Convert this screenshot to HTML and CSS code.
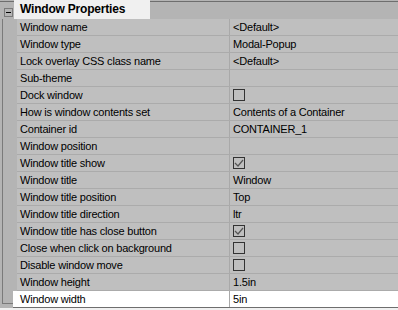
FILE: index.html
```html
<!DOCTYPE html>
<html>

<head>
    <meta charset="utf-8">
    <title>Window Properties</title>
    <link rel="stylesheet" href="styles.css">
</head>

<body>
    <div class="grid">
        <div class="cat">
            <div class="cat-gutter"><span class="minus"></span></div>
            <div class="cat-title">Window Properties</div>
            <div class="cat-fill"></div>
        </div>
        <div class="group">
            <div class="gutter"><div class="bracket"></div></div>
            <div class="rows">
                <div class="row"><div class="name">Window name</div><div class="val">&lt;Default&gt;</div></div>
                <div class="row"><div class="name">Window type</div><div class="val">Modal-Popup</div></div>
                <div class="row"><div class="name">Lock overlay CSS class name</div><div class="val">&lt;Default&gt;</div></div>
                <div class="row"><div class="name">Sub-theme</div><div class="val"></div></div>
                <div class="row"><div class="name">Dock window</div><div class="val"><span class="chk"></span></div></div>
                <div class="row"><div class="name">How is window contents set</div><div class="val">Contents of a Container</div></div>
                <div class="row"><div class="name">Container id</div><div class="val">CONTAINER_1</div></div>
                <div class="row"><div class="name">Window position</div><div class="val"></div></div>
                <div class="row"><div class="name">Window title show</div><div class="val"><span class="chk"><svg width="10" height="10" viewBox="0 0 10 10"><path d="M1 5 L4 8 L9 2" fill="none" stroke="#555" stroke-width="1.2"/></svg></span></div></div>
                <div class="row"><div class="name">Window title</div><div class="val">Window</div></div>
                <div class="row"><div class="name">Window title position</div><div class="val">Top</div></div>
                <div class="row"><div class="name">Window title direction</div><div class="val">ltr</div></div>
                <div class="row"><div class="name">Window title has close button</div><div class="val"><span class="chk"><svg width="10" height="10" viewBox="0 0 10 10"><path d="M1 5 L4 8 L9 2" fill="none" stroke="#555" stroke-width="1.2"/></svg></span></div></div>
                <div class="row"><div class="name">Close when click on background</div><div class="val"><span class="chk"></span></div></div>
                <div class="row"><div class="name">Disable window move</div><div class="val"><span class="chk"></span></div></div>
                <div class="row"><div class="name">Window height</div><div class="val">1.5in</div></div>
                <div class="row selected"><div class="name">Window width</div><div class="val">5in</div></div>
            </div>
        </div>
    </div>
</body>

</html>
```

FILE: styles.css
```css
* {
    margin: 0;
    padding: 0;
    box-sizing: border-box;
}

body {
    background: #f0f0f0;
    font-family: "Liberation Sans", Arial, sans-serif;
    font-size: 11px;
    letter-spacing: -0.2px;
    color: #000000;
}

.grid {
    width: 398px;
    background: #b4b4b4;
}

.cat {
    display: flex;
    height: 19px;
}

.cat-gutter {
    width: 14px;
    border-top: 1px solid #6e6e6e;
    margin-top: 1px;
    padding: 6px 0 0 4px;
}

.minus {
    display: block;
    width: 9px;
    height: 9px;
    border: 1px solid #7a7a7a;
    position: relative;
}

.minus::after {
    content: "";
    position: absolute;
    left: 1px;
    top: 3px;
    width: 5px;
    height: 1px;
    background: #000000;
}

.cat-title {
    width: 136px;
    background: #f0f0f0;
    font-weight: bold;
    font-size: 12px;
    line-height: 19px;
    padding-left: 6px;
}

.cat-fill {
    flex: 1;
    border-top: 1px solid #6e6e6e;
    margin-top: 1px;
}

.group {
    display: flex;
}

.gutter {
    width: 17px;
    padding-left: 2px;
}

.bracket {
    width: 11px;
    height: 285px;
    border-left: 1px solid #7a7a7a;
    border-bottom: 1px solid #7a7a7a;
}

.rows {
    flex: 1;
}

.row {
    display: flex;
    height: 17px;
    background: #bfbfbf;
    border-bottom: 1px solid #ababab;
}

.row.selected {
    background: #ffffff;
    margin-left: -4px;
    border-bottom: 1px solid #6e6e6e;
}

.name {
    width: 213px;
    padding-left: 3px;
    line-height: 17px;
    white-space: nowrap;
    border-right: 1px solid #a9a9a9;
}

.selected .name {
    width: 217px;
    padding-left: 7px;
}

.val {
    flex: 1;
    padding-left: 3px;
    line-height: 17px;
    white-space: nowrap;
}

.chk {
    display: block;
    width: 12px;
    height: 12px;
    margin-top: 2px;
    border: 1px solid #333333;
}

.chk svg {
    display: block;
}
```
